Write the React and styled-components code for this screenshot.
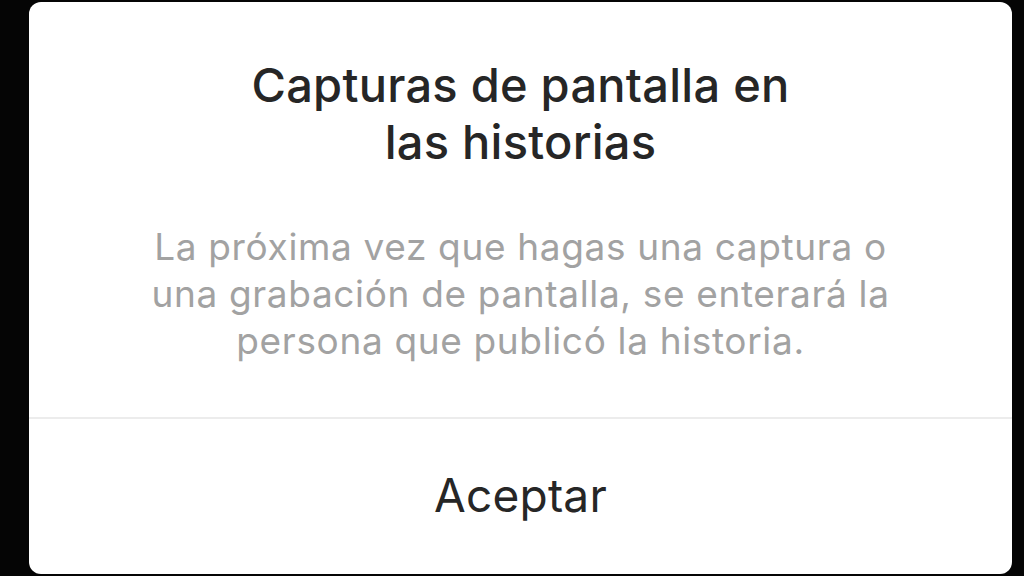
import React from "react";
import styled, { createGlobalStyle } from "styled-components";

const GlobalStyle = createGlobalStyle`
  html, body {
    margin: 0;
    padding: 0;
    background: #050505;
  }
  body {
    font-family: Inter, "Helvetica Neue", "Liberation Sans", Arial, sans-serif;
    -webkit-font-smoothing: antialiased;
  }
`;

const Screen = styled.div`
  width: 1024px;
  height: 576px;
  box-sizing: border-box;
  padding: 2px 12px 2px 29px;
  background: #050505;
  overflow: hidden;
`;

const Dialog = styled.div`
  height: 572px;
  background: #ffffff;
  border-radius: 12px;
  display: flex;
  flex-direction: column;
  overflow: hidden;
`;

const Content = styled.div`
  padding: 54px 60px 53px;
  display: flex;
  flex-direction: column;
  align-items: center;
  gap: 53px;
  text-align: center;
`;

const Title = styled.h2`
  margin: 0;
  font-size: 47px;
  line-height: 57px;
  font-weight: 500;
  color: #262626;
  letter-spacing: 0.25px;
`;

const Message = styled.p`
  margin: 0;
  font-size: 37px;
  line-height: 47px;
  font-weight: 400;
  color: #a2a2a2;
  letter-spacing: 0.65px;
`;

const ActionButton = styled.button`
  flex: 1;
  border: none;
  border-top: 2px solid #ececec;
  background: transparent;
  font-family: inherit;
  font-size: 46px;
  font-weight: 400;
  color: #262626;
  letter-spacing: 0.2px;
  padding: 0 0 4px;
  cursor: pointer;
`;

export default function App() {
  return (
    <>
      <GlobalStyle />
      <Screen>
        <Dialog>
          <Content>
            <Title>
              Capturas de pantalla en
              <br />
              las historias
            </Title>
            <Message>
              La próxima vez que hagas una captura o
              <br />
              una grabación de pantalla, se enterará la
              <br />
              persona que publicó la historia.
            </Message>
          </Content>
          <ActionButton>Aceptar</ActionButton>
        </Dialog>
      </Screen>
    </>
  );
}
